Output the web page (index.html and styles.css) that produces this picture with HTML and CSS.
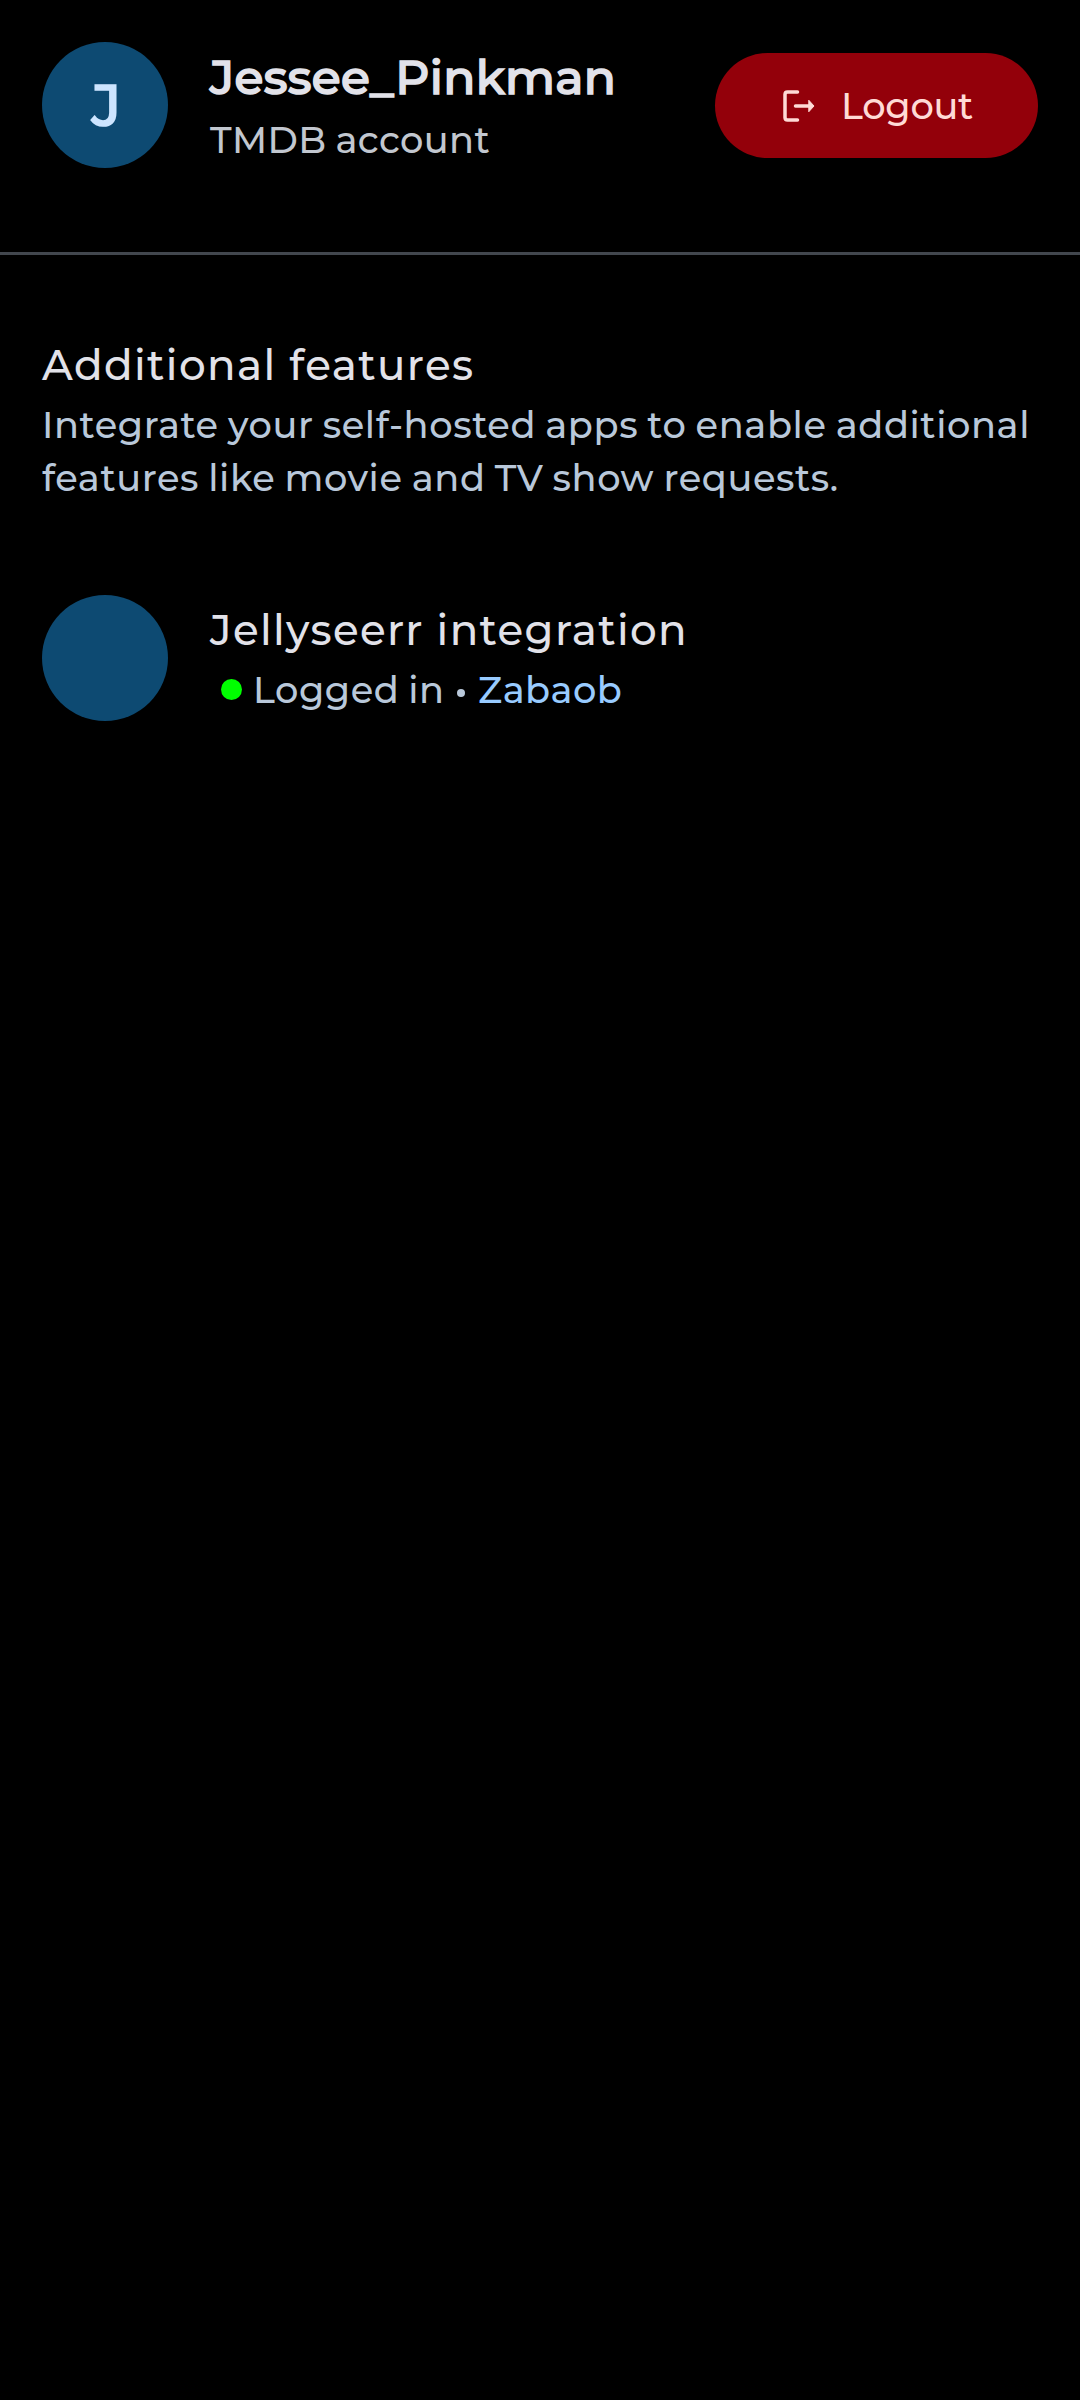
FILE: index.html
```html
<!DOCTYPE html>
<html lang="en">
<head>
<meta charset="utf-8">
<title>Account</title>
<link rel="stylesheet" href="styles.css">
</head>
<body>
<header class="account">
  <div class="avatar">J</div>
  <div class="account-text">
    <h1 class="name">Jessee_Pinkman</h1>
    <p class="account-type">TMDB account</p>
  </div>
  <button class="logout" type="button">
    <svg class="logout-icon" width="32" height="32" viewBox="0 0 32 32" fill="none" stroke="currentColor" stroke-width="3.5" stroke-linecap="round" stroke-linejoin="round">
      <path d="M14.5 2H4.5Q2 2 2 4.500V27.500Q2 30 4.500 30H14.500M12.500 16H27"/>
      <path d="M26 10.500 31 16 26 21.500Z" fill="currentColor" stroke-width="1"/>
    </svg>
    <span class="logout-label">Logout</span>
  </button>
</header>
<main class="features">
  <h2 class="section-title">Additional features</h2>
  <p class="section-text">Integrate your self-hosted apps to enable additional<br>features like movie and TV show requests.</p>
  <div class="integration">
    <div class="avatar"></div>
    <div class="integration-text">
      <h2 class="integration-title">Jellyseerr integration</h2>
      <div class="status">
        <span class="status-dot"></span>
        <span class="status-label">Logged in</span>
        <span class="separator"></span>
        <span class="username">Zabaob</span>
      </div>
    </div>
  </div>
</main>
</body>
</html>
```

FILE: styles.css
```css
* { box-sizing: border-box; margin: 0; }

body {
  min-height: 2400px;
  background: #000;
  color: #e2e2e9;
  font-family: Montserrat, Inter, sans-serif;
  font-weight: 500;
}

.account {
  display: flex;
  height: 255px;
  padding: 42px 42px 0;
  border-bottom: 3px solid #42474e;
}

.avatar {
  display: flex;
  flex: none;
  align-items: center;
  justify-content: center;
  width: 126px;
  height: 126px;
  padding-left: 3px;
  border-radius: 50%;
  background: #0d4a72;
  color: #cde5ff;
  font-size: 57.75px;
  -webkit-text-stroke: 1.6px currentColor;
}

.account-text { flex: 1; margin-left: 42px; white-space: nowrap; }

.name {
  font-size: 47.25px;
  line-height: 70px;
  font-weight: 500;
  letter-spacing: 0.33px;
  -webkit-text-stroke: 1.6px currentColor;
}

.account-type {
  color: #c2c7cf;
  font-size: 36.75px;
  line-height: 55px;
  letter-spacing: 0.4px;
  word-spacing: -1.3px;
}

.logout {
  display: flex;
  align-items: center;
  width: 323px;
  height: 105px;
  margin-top: 11px;
  padding: 0 0 0 68px;
  border: 0;
  border-radius: 53px;
  background: #93000a;
  color: #ffdad6;
  font: inherit;
}

.logout-icon { flex: none; }

.logout-label { margin-left: 26px; font-size: 36.75px; line-height: 54px; letter-spacing: -0.3px; }

.features { padding: 78px 42px 0; }

.section-title { font-size: 42px; line-height: 64px; font-weight: 500; letter-spacing: 1.4px; }

.section-text {
  padding-top: 2px;
  color: #b9c8da;
  font-size: 36.75px;
  line-height: 52.5px;
  letter-spacing: 0.6px;
  word-spacing: -1.3px;
  white-space: nowrap;
}

.integration { display: flex; margin-top: 91px; }

.integration-text {
  display: flex;
  flex-direction: column;
  justify-content: center;
  margin-left: 42px;
}

.integration-title { font-size: 42px; line-height: 64px; font-weight: 500; letter-spacing: 1.35px; }

.status {
  display: flex;
  align-items: center;
  padding-left: 11px;
  color: #b9c8da;
  font-size: 36.75px;
  line-height: 56px;
  letter-spacing: 0.5px;
  word-spacing: -1.3px;
}

.status-dot { width: 21px; height: 21px; margin-bottom: 2px; border-radius: 50%; background: #0f0; }

.status-label { width: 204px; margin-left: 11px; }

.separator { width: 8px; height: 8px; margin-top: 6px; border-radius: 50%; background: currentColor; }

.username { margin-left: 13px; color: #98cbff; }
```
